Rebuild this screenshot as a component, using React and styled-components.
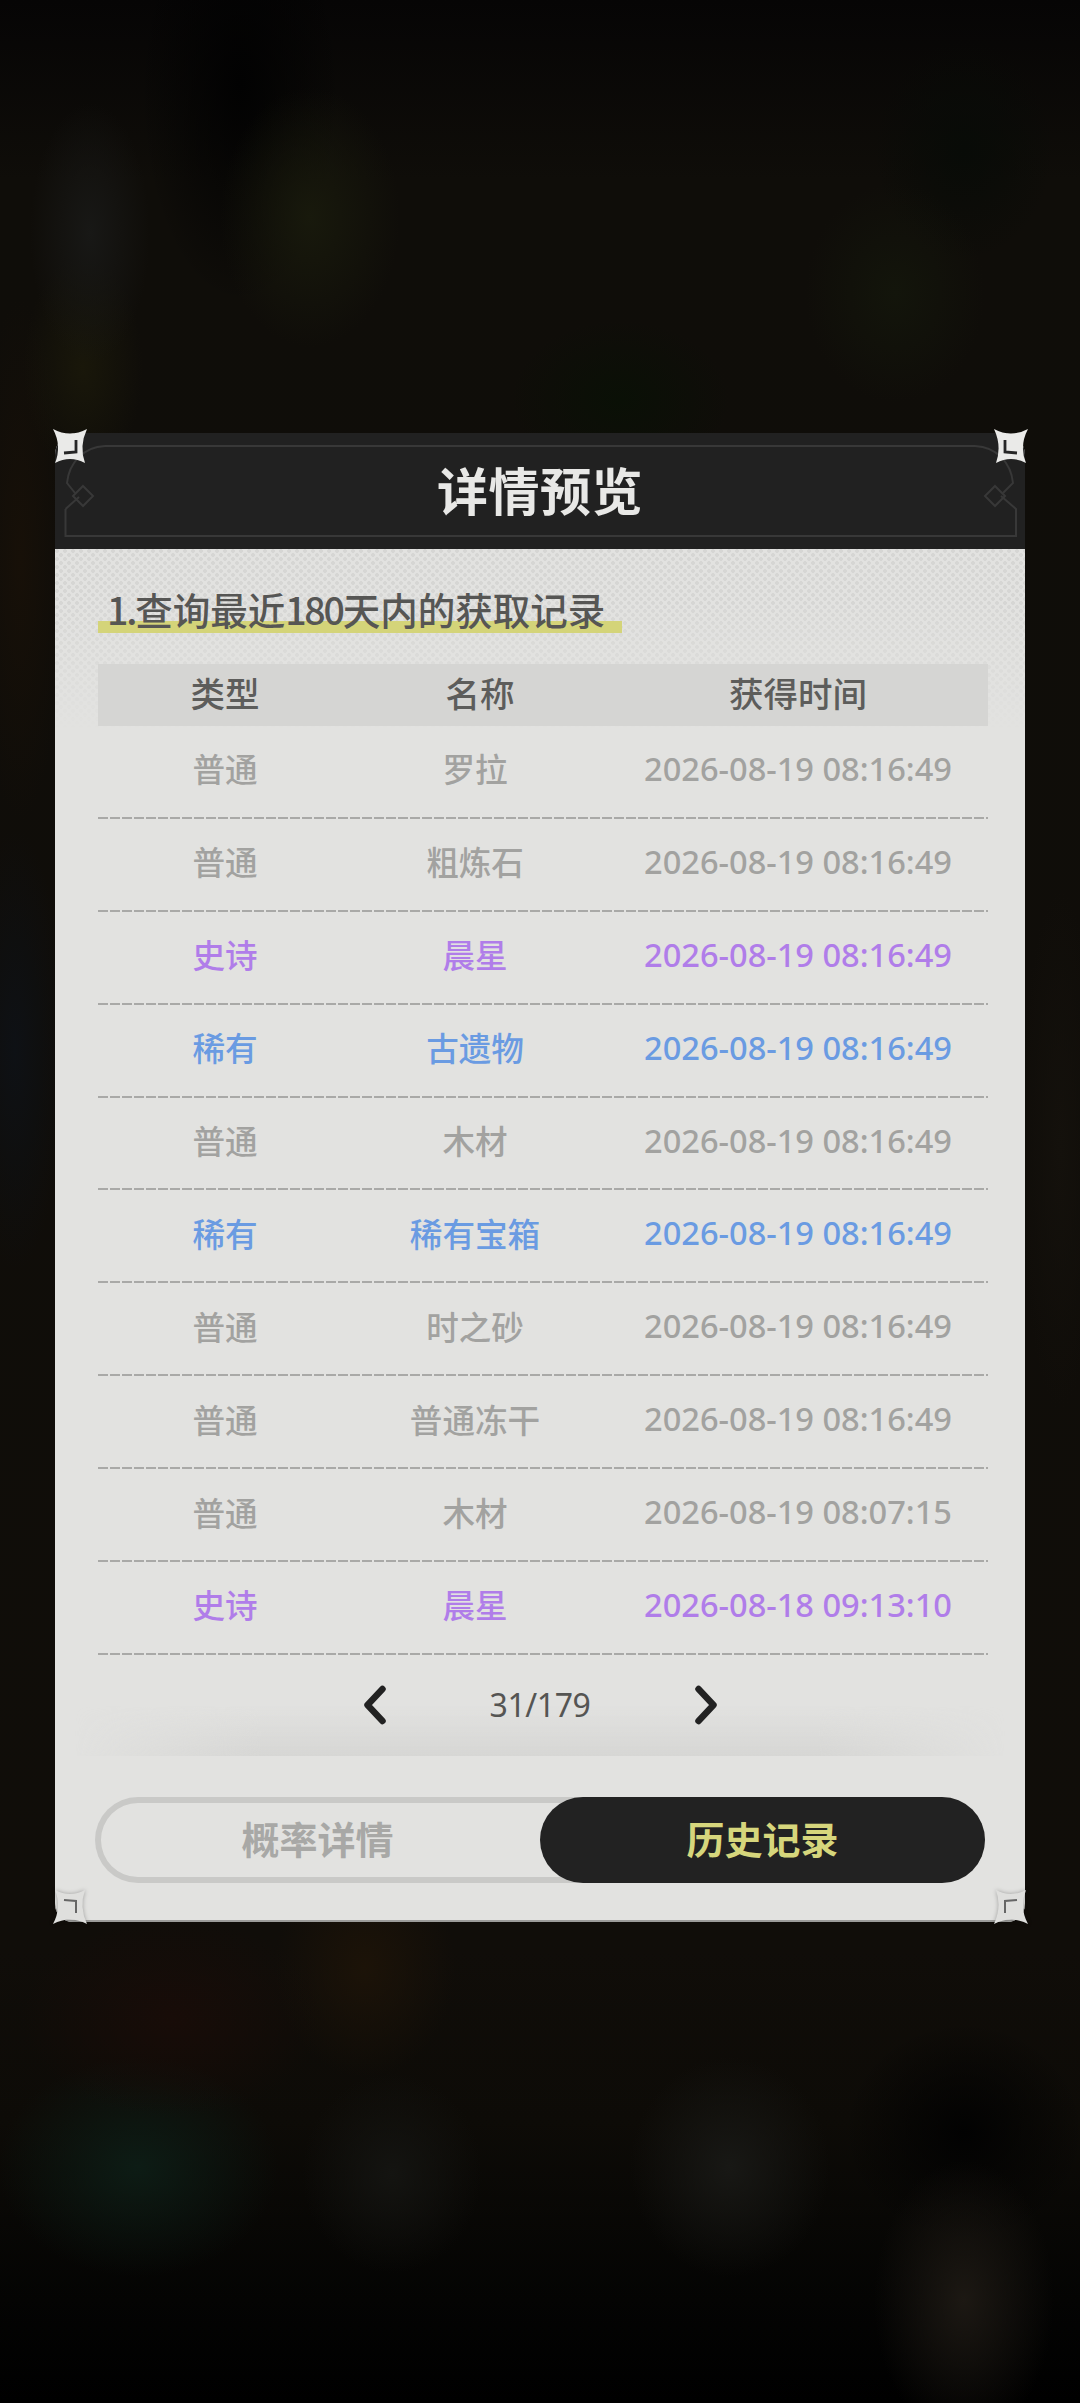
import React from "react";
import styled, { createGlobalStyle } from "styled-components";

const FONT = `"Noto Sans", "Noto Sans CJK SC", sans-serif`;

const Global = createGlobalStyle`
  html, body { margin: 0; padding: 0; background: #000; }
  * { box-sizing: border-box; }
`;

const Page = styled.div`
  width: 1080px;
  height: 2403px;
  overflow: hidden;
  padding: 433px 55px 0;
  font-family: ${FONT};
  background:
    radial-gradient(60px 130px at 90px 233px, #181816, transparent),
    radial-gradient(90px 130px at 310px 217px, #18190c, transparent),
    radial-gradient(60px 110px at 83px 367px, #19170a, transparent),
    radial-gradient(110px 80px at 620px 400px, #0a1006, transparent),
    radial-gradient(90px 110px at 895px 293px, #13150b, transparent),
    radial-gradient(90px 110px at 964px 150px, #080b07, transparent),
    radial-gradient(100px 220px at 240px 83px, #020202, transparent),
    radial-gradient(50px 220px at 15px 1050px, #0e1115, transparent),
    radial-gradient(45px 260px at 20px 560px, #171008, transparent),
    radial-gradient(40px 260px at 1060px 1150px, #14110c, transparent),
    radial-gradient(150px 100px at 172px 2017px, #180c08, transparent),
    radial-gradient(90px 110px at 365px 1967px, #1c1308, transparent),
    radial-gradient(140px 110px at 138px 2167px, #0d1c15, transparent),
    radial-gradient(90px 100px at 392px 2173px, #141411, transparent),
    radial-gradient(100px 110px at 730px 2167px, #181815, transparent),
    radial-gradient(90px 140px at 964px 2300px, #1c1813, transparent),
    radial-gradient(120px 110px at 964px 2133px, #020202, transparent),
    linear-gradient(to bottom, #060505 0, #0f0d09 180px, #100d09 1950px, #0d0b07 2120px, #040403 2300px, #000 2403px);
`;

const Panel = styled.section`
  position: relative;
  width: 970px;
  height: 1489px;
  display: flex;
  flex-direction: column;
  background: #e2e2e0;
  border-radius: 22px 22px 18px 18px;
  box-shadow: inset 0 -2px 0 #9c9c9a;
`;

const Header = styled.header`
  position: relative;
  height: 116px;
  flex: none;
  display: flex;
  align-items: center;
  justify-content: center;
  background: #212121;
  border-radius: 22px 22px 0 0;
`;

const Title = styled.h1`
  position: relative;
  margin: 0;
  font-size: 51px;
  line-height: 1;
  font-weight: 700;
  letter-spacing: 0.5px;
  color: #e8e8e6;
`;

const FrameSvg = styled.svg`
  position: absolute;
  inset: 0;
  width: 970px;
  height: 116px;
`;

const Body = styled.div`
  position: relative;
  flex: 1;
  display: flex;
  flex-direction: column;
  padding: 36px 37px 0 43px;
  &::before {
    content: "";
    position: absolute;
    left: 0;
    right: 0;
    top: 0;
    height: 180px;
    background-image:
      radial-gradient(circle at 2px 2px, #d6d6d4 1.6px, transparent 2.2px),
      radial-gradient(circle at 2px 2px, #d6d6d4 1.6px, transparent 2.2px);
    background-size: 8px 8px;
    background-position: 0 0, 4px 4px;
    -webkit-mask-image: linear-gradient(to bottom, #000 30%, transparent 100%);
    mask-image: linear-gradient(to bottom, #000 30%, transparent 100%);
  }
  & > * { position: relative; }
`;

const Subtitle = styled.h2`
  align-self: flex-start;
  margin: 0 0 31px;
  padding: 0 17px 0 9px;
  width: 524px;
  height: 48px;
  font-family: "Noto Sans CJK SC", sans-serif;
  font-size: 37.5px;
  line-height: 48px;
  font-weight: 500;
  color: #565654;
  white-space: nowrap;
  background: linear-gradient(#d4d479, #d4d479) no-repeat 0 100% / 100% 12px;
`;

const Num = styled.span`
  letter-spacing: -2.2px;
`;

const Table = styled.div`
  width: 890px;
`;

const HeadRow = styled.div`
  display: grid;
  grid-template-columns: 254px 246px 390px;
  height: 62px;
  padding-bottom: 6px;
  align-items: center;
  background: #d5d5d3;
`;

const HeadCell = styled.div`
  text-align: center;
  font-size: 34.5px;
  font-weight: 500;
  color: #5d5d5b;
  padding-left: ${(p) => p.$inset || 0}px;
`;

const TONES = { normal: "#a2a2a0", epic: "#b07de9", rare: "#6a9be2" };

const Row = styled.div`
  display: grid;
  grid-template-columns: 254px 246px 390px;
  height: 92.9px;
  align-items: center;
  padding-bottom: 8px;
  color: ${(p) => TONES[p.$tone]};
  background: repeating-linear-gradient(to right, #a9a9a7 0 10px, transparent 10px 12px) no-repeat bottom / 100% 2px;
`;

const Cell = styled.div`
  text-align: center;
  font-size: 32.6px;
  font-weight: 500;
  white-space: nowrap;
  padding-left: ${(p) => p.$inset || 0}px;
`;

const Pager = styled.div`
  position: relative;
  height: 101px;
  margin: 0 -37px 0 -43px;
  display: flex;
  align-items: center;
  justify-content: center;
  gap: 103px;
  &::before {
    content: "";
    position: absolute;
    left: 20px;
    right: 20px;
    bottom: 0;
    height: 50px;
    background: linear-gradient(to bottom, transparent, #d6d6d4);
    -webkit-mask-image: linear-gradient(to right, transparent, #000 20%, #000 80%, transparent);
    mask-image: linear-gradient(to right, transparent, #000 20%, #000 80%, transparent);
  }
  & > * { position: relative; }
`;

const PageText = styled.span`
  font-size: 32px;
  letter-spacing: -0.4px;
  line-height: 1;
  color: #555553;
  width: 101px;
  text-align: center;
  white-space: nowrap;
`;

const Chevron = styled.svg`
  width: 24px;
  height: 40px;
  display: block;
`;

const Tabs = styled.div`
  display: grid;
  grid-template-columns: 1fr 1fr;
  width: 890px;
  height: 86px;
  margin: 41px 0 0 -3px;
  border-radius: 43px;
  box-shadow: inset 0 0 0 6px #c9c9c7;
`;

const Tab = styled.div`
  display: flex;
  align-items: center;
  justify-content: center;
  padding-bottom: 5px;
  border-radius: 43px;
  font-size: 38px;
  font-weight: 700;
  color: ${(p) => (p.$active ? "#d6d67c" : "#a8a8a6")};
  background: ${(p) => (p.$active ? "#222222" : "transparent")};
`;

const StarWrap = styled.svg`
  position: absolute;
  width: 36px;
  height: 36px;
  ${(p) => (p.$bottom ? "bottom: -3px;" : "top: -5px;")}
  ${(p) => (p.$right ? "right: -4px;" : "left: -3px;")}
  transform: scale(${(p) => (p.$right ? -1 : 1)}, ${(p) => (p.$bottom ? -1 : 1)});
  ${(p) => p.$bottom && "filter: drop-shadow(0 0 2px rgba(0,0,0,.3));"}
`;

const Star = ({ bottom, right }) => (
  <StarWrap viewBox="0 0 36 36" $bottom={bottom} $right={right}>
    <path
      d="M1 1 Q18 10 35 1 Q27 18 33 35 Q18 27 3 35 Q10 18 1 1Z"
      fill={bottom ? "#dfdfdd" : "#eaeae8"}
    />
    <path
      d="M24 12 L24 24 L12 25"
      fill="none"
      stroke={bottom ? "#666" : "#262626"}
      strokeWidth={bottom ? 2 : 2.8}
    />
  </StarWrap>
);

const rows = [
  ["normal", "普通", "罗拉", "2026-08-19 08:16:49"],
  ["normal", "普通", "粗炼石", "2026-08-19 08:16:49"],
  ["epic", "史诗", "晨星", "2026-08-19 08:16:49"],
  ["rare", "稀有", "古遗物", "2026-08-19 08:16:49"],
  ["normal", "普通", "木材", "2026-08-19 08:16:49"],
  ["rare", "稀有", "稀有宝箱", "2026-08-19 08:16:49"],
  ["normal", "普通", "时之砂", "2026-08-19 08:16:49"],
  ["normal", "普通", "普通冻干", "2026-08-19 08:16:49"],
  ["normal", "普通", "木材", "2026-08-19 08:07:15"],
  ["epic", "史诗", "晨星", "2026-08-18 09:13:10"],
];

export default function App() {
  return (
    <Page>
      <Global />
      <Panel>
        <Header>
          <FrameSvg viewBox="0 0 970 116" fill="none" stroke="#383838" strokeWidth="2">
            <path d="M10.5 76V103H961V76L946 63" />
            <path d="M10.5 76L24 64" />
            <path d="M20 60L12 50C14 30 28 14 50 13H920C942 14 956 30 958 50L948 60" />
            <path d="M28 53L38 63L28 73L18 63Z" />
            <path d="M940 53L950 63L940 73L930 63Z" />
          </FrameSvg>
          <Title>详情预览</Title>
        </Header>
        <Body>
          <Subtitle>
            <Num>1.</Num>查询最近<Num>180</Num>天内的获取记录
          </Subtitle>
          <Table>
            <HeadRow>
              <HeadCell>类型</HeadCell>
              <HeadCell $inset={10}>名称</HeadCell>
              <HeadCell $inset={10}>获得时间</HeadCell>
            </HeadRow>
            {rows.map((r, i) => (
              <Row key={i} $tone={r[0]}>
                <Cell>{r[1]}</Cell>
                <Cell>{r[2]}</Cell>
                <Cell $inset={10}>{r[3]}</Cell>
              </Row>
            ))}
          </Table>
          <Pager>
            <Chevron viewBox="0 0 24 40">
              <path d="M19.5 4L4.5 20L19.5 36" fill="none" stroke="#222" strokeWidth="6.5" strokeLinecap="round" strokeLinejoin="round" />
            </Chevron>
            <PageText>31/179</PageText>
            <Chevron viewBox="0 0 24 40">
              <path d="M4.5 4L19.5 20L4.5 36" fill="none" stroke="#222" strokeWidth="6.5" strokeLinecap="round" strokeLinejoin="round" />
            </Chevron>
          </Pager>
          <Tabs>
            <Tab>概率详情</Tab>
            <Tab $active>历史记录</Tab>
          </Tabs>
        </Body>
        <Star />
        <Star right />
        <Star bottom />
        <Star bottom right />
      </Panel>
    </Page>
  );
}
